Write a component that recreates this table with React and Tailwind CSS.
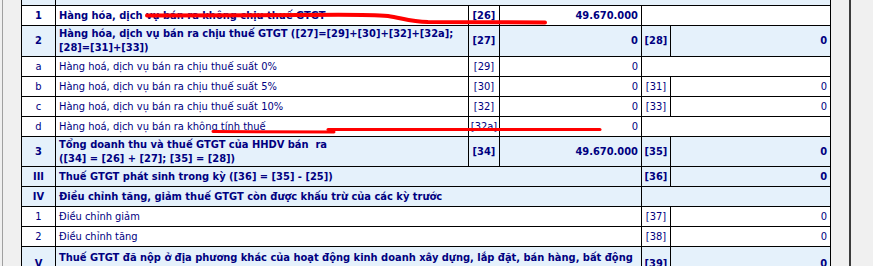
const NAVY = 'text-[#000080]'

function Row({ no, text, code, val, code2, val2, wide, bold, blue, h = 'h-[20px]', empty2, top }) {
  const bg = blue ? 'bg-[#e5f1fb]' : 'bg-white'
  const w = bold ? 'font-bold' : 'font-normal'
  const cell = `border border-black ${bg} ${NAVY} ${w} leading-[14px] p-0`
  return (
    <tr className={h}>
      <td className={`${cell} text-center`}>{no}</td>
      <td
        className={`${cell} pl-[3px] pr-1 overflow-hidden whitespace-nowrap ${top ? 'align-top pt-[4px]' : ''}`}
        colSpan={wide ? 3 : 1}
      >
        {text}
      </td>
      {!wide && <td className={`${cell} text-center`}>{code}</td>}
      {!wide && <td className={`${cell} text-right pr-[3px]`}>{val}</td>}
      {empty2 ? (
        <td className={cell} colSpan={2}></td>
      ) : (
        <>
          <td className={`${cell} text-center`}>{code2}</td>
          <td className={`${cell} text-right pr-[3px]`}>{val2}</td>
        </>
      )}
    </tr>
  )
}

export default function App() {
  return (
    <div className="relative w-[873px] h-[266px] overflow-hidden bg-[#f0f0f0] font-['DejaVu_Sans_Condensed','Liberation_Sans',sans-serif] text-[11px]">
      <div className="flex h-full">
        <div className="w-[21px] shrink-0 pl-[2px]">
          <div className="w-px h-full bg-[#a0a0a0]" />
        </div>

        <table className="table-fixed border-collapse w-[809px] shrink-0 self-start -mt-[15px]">
          <colgroup>
            <col className="w-[34px]" />
            <col className="w-[413px]" />
            <col className="w-[31px]" />
            <col className="w-[142px]" />
            <col className="w-[29px]" />
            <col className="w-[160px]" />
          </colgroup>
          <tbody>
            <tr className="h-[20px]">
              <td className="border border-black bg-[#e5f1fb] p-0"></td>
              <td colSpan={5} className={`border border-black bg-[#e5f1fb] ${NAVY} font-bold pl-[3px] p-0`}>
                Hàng hóa, dịch vụ bán ra trong kỳ
              </td>
            </tr>
            <Row no="1" bold text="Hàng hóa, dịch vụ bán ra không chịu thuế GTGT" code="[26]" val="49.670.000" empty2 />
            <Row
              no="2"
              bold
              blue
              h="h-[31px]"
              text={<>Hàng hóa, dịch vụ bán ra chịu thuế GTGT ([27]=[29]+[30]+[32]+[32a];<br />[28]=[31]+[33])</>}
              code="[27]"
              val="0"
              code2="[28]"
              val2="0"
            />
            <Row no="a" text="Hàng hoá, dịch vụ bán ra chịu thuế suất 0%" code="[29]" val="0" empty2 />
            <Row no="b" text="Hàng hoá, dịch vụ bán ra chịu thuế suất 5%" code="[30]" val="0" code2="[31]" val2="0" />
            <Row no="c" text="Hàng hoá, dịch vụ bán ra chịu thuế suất 10%" code="[32]" val="0" code2="[33]" val2="0" />
            <Row no="d" text="Hàng hoá, dịch vụ bán ra không tính thuế" code="[32a]" val="0" empty2 />
            <Row
              no="3"
              bold
              blue
              h="h-[30px]"
              text={<>Tổng doanh thu và thuế GTGT của HHDV bán&nbsp; ra<br />([34] = [26] + [27]; [35] = [28])</>}
              code="[34]"
              val="49.670.000"
              code2="[35]"
              val2="0"
            />
            <Row no="III" bold blue wide text="Thuế GTGT phát sinh trong kỳ ([36] = [35] - [25])" code2="[36]" val2="0" />
            <Row no="IV" bold blue wide text="Điều chỉnh tăng, giảm thuế GTGT còn được khấu trừ của các kỳ trước" empty2 />
            <Row no="1" wide text="Điều chỉnh giảm" code2="[37]" val2="0" />
            <Row no="2" wide text="Điều chỉnh tăng" code2="[38]" val2="0" />
            <Row
              no="V"
              bold
              blue
              wide
              top
              h="h-[34px]"
              text="Thuế GTGT đã nộp ở địa phương khác của hoạt động kinh doanh xây dựng, lắp đặt, bán hàng, bất động"
              code2="[39]"
              val2="0"
            />
          </tbody>
        </table>

        <div className="w-[18px] shrink-0" />
        <div className="w-[2px] h-full shrink-0 bg-[#3c3c3c]" />
        <div className="flex-1" />
      </div>

      <svg className="absolute inset-0 pointer-events-none" width="873" height="266" viewBox="0 0 873 266">
        <path
          d="M147 15.5 L300 15 C340 14.5 372 14.5 388 16 C402 18 410 21.5 428 22 L545 22.5"
          fill="none"
          stroke="#ff0000"
          strokeWidth="4"
          strokeLinecap="round"
        />
        <path d="M213 131.5 L334 132" fill="none" stroke="#ff0000" strokeWidth="3" strokeLinecap="round" />
        <path d="M328 129.5 L600 129.5" fill="none" stroke="#ff0000" strokeWidth="3" strokeLinecap="round" />
      </svg>
    </div>
  )
}
